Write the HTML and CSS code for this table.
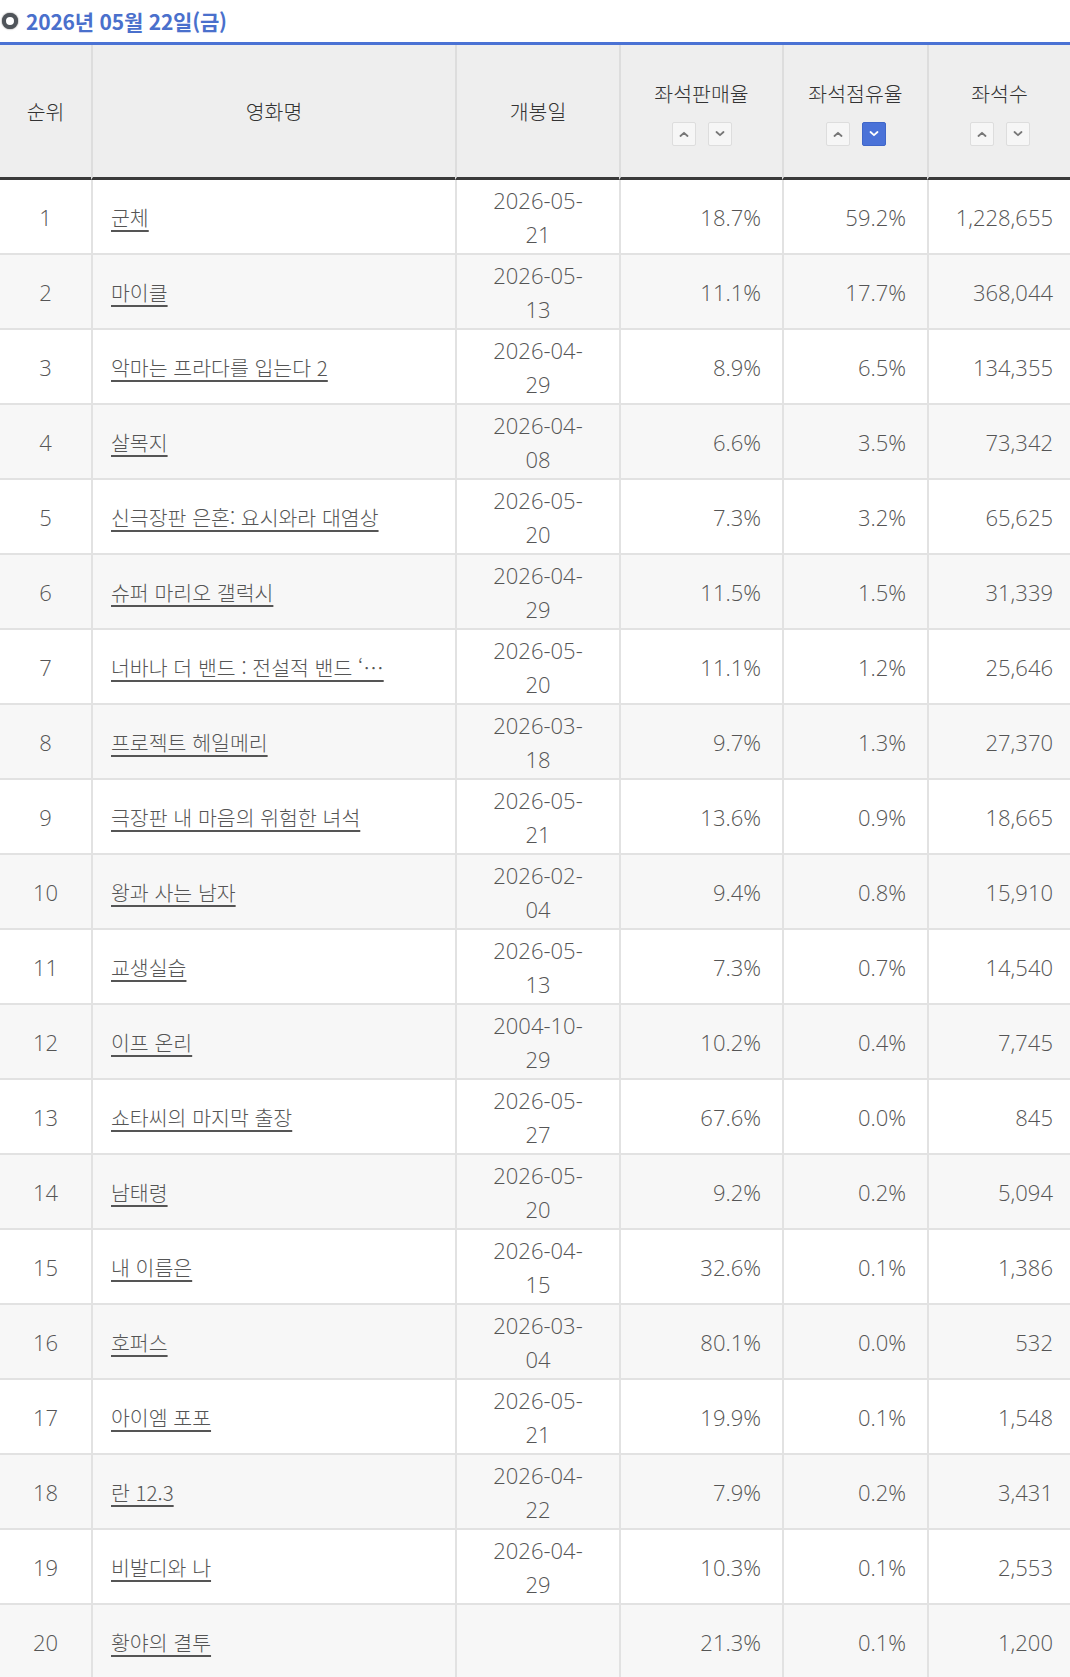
FILE: index.html
```html
<!DOCTYPE html>
<html lang="ko">
<head>
<meta charset="utf-8">
<title>좌석점유율</title>
<link rel="stylesheet" href="styles.css">
</head>
<body>
<h2 class="date-title"><span class="ring"></span>2026년 05월 22일(금)</h2>
<table class="rank-table">
  <colgroup>
    <col class="c-rank"><col class="c-title"><col class="c-date"><col class="c-sale"><col class="c-share"><col class="c-seat">
  </colgroup>
  <thead>
    <tr>
      <th>순위</th>
      <th>영화명</th>
      <th>개봉일</th>
      <th><div class="th-label">좌석판매율</div><div class="sorts"><span class="sort"><svg viewBox="0 0 10 6"><path d="M1.5 5 L5 1.8 L8.5 5"/></svg></span><span class="sort"><svg viewBox="0 0 10 6"><path d="M1.5 1 L5 4.2 L8.5 1"/></svg></span></div></th>
      <th><div class="th-label">좌석점유율</div><div class="sorts"><span class="sort"><svg viewBox="0 0 10 6"><path d="M1.5 5 L5 1.8 L8.5 5"/></svg></span><span class="sort on"><svg viewBox="0 0 10 6"><path d="M1.5 1 L5 4.2 L8.5 1"/></svg></span></div></th>
      <th><div class="th-label">좌석수</div><div class="sorts"><span class="sort"><svg viewBox="0 0 10 6"><path d="M1.5 5 L5 1.8 L8.5 5"/></svg></span><span class="sort"><svg viewBox="0 0 10 6"><path d="M1.5 1 L5 4.2 L8.5 1"/></svg></span></div></th>
    </tr>
  </thead>
  <tbody>
    <tr><td class="rank">1</td><td class="title"><a href="#">군체</a></td><td class="date">2026-05-<br>21</td><td class="num">18.7%</td><td class="num">59.2%</td><td class="num last">1,228,655</td></tr>
    <tr><td class="rank">2</td><td class="title"><a href="#">마이클</a></td><td class="date">2026-05-<br>13</td><td class="num">11.1%</td><td class="num">17.7%</td><td class="num last">368,044</td></tr>
    <tr><td class="rank">3</td><td class="title"><a href="#">악마는 프라다를 입는다 2</a></td><td class="date">2026-04-<br>29</td><td class="num">8.9%</td><td class="num">6.5%</td><td class="num last">134,355</td></tr>
    <tr><td class="rank">4</td><td class="title"><a href="#">살목지</a></td><td class="date">2026-04-<br>08</td><td class="num">6.6%</td><td class="num">3.5%</td><td class="num last">73,342</td></tr>
    <tr><td class="rank">5</td><td class="title"><a href="#">신극장판 은혼: 요시와라 대염상</a></td><td class="date">2026-05-<br>20</td><td class="num">7.3%</td><td class="num">3.2%</td><td class="num last">65,625</td></tr>
    <tr><td class="rank">6</td><td class="title"><a href="#">슈퍼 마리오 갤럭시</a></td><td class="date">2026-04-<br>29</td><td class="num">11.5%</td><td class="num">1.5%</td><td class="num last">31,339</td></tr>
    <tr><td class="rank">7</td><td class="title"><a href="#">너바나 더 밴드 : 전설적 밴드 ‘…</a></td><td class="date">2026-05-<br>20</td><td class="num">11.1%</td><td class="num">1.2%</td><td class="num last">25,646</td></tr>
    <tr><td class="rank">8</td><td class="title"><a href="#">프로젝트 헤일메리</a></td><td class="date">2026-03-<br>18</td><td class="num">9.7%</td><td class="num">1.3%</td><td class="num last">27,370</td></tr>
    <tr><td class="rank">9</td><td class="title"><a href="#">극장판 내 마음의 위험한 녀석</a></td><td class="date">2026-05-<br>21</td><td class="num">13.6%</td><td class="num">0.9%</td><td class="num last">18,665</td></tr>
    <tr><td class="rank">10</td><td class="title"><a href="#">왕과 사는 남자</a></td><td class="date">2026-02-<br>04</td><td class="num">9.4%</td><td class="num">0.8%</td><td class="num last">15,910</td></tr>
    <tr><td class="rank">11</td><td class="title"><a href="#">교생실습</a></td><td class="date">2026-05-<br>13</td><td class="num">7.3%</td><td class="num">0.7%</td><td class="num last">14,540</td></tr>
    <tr><td class="rank">12</td><td class="title"><a href="#">이프 온리</a></td><td class="date">2004-10-<br>29</td><td class="num">10.2%</td><td class="num">0.4%</td><td class="num last">7,745</td></tr>
    <tr><td class="rank">13</td><td class="title"><a href="#">쇼타씨의 마지막 출장</a></td><td class="date">2026-05-<br>27</td><td class="num">67.6%</td><td class="num">0.0%</td><td class="num last">845</td></tr>
    <tr><td class="rank">14</td><td class="title"><a href="#">남태령</a></td><td class="date">2026-05-<br>20</td><td class="num">9.2%</td><td class="num">0.2%</td><td class="num last">5,094</td></tr>
    <tr><td class="rank">15</td><td class="title"><a href="#">내 이름은</a></td><td class="date">2026-04-<br>15</td><td class="num">32.6%</td><td class="num">0.1%</td><td class="num last">1,386</td></tr>
    <tr><td class="rank">16</td><td class="title"><a href="#">호퍼스</a></td><td class="date">2026-03-<br>04</td><td class="num">80.1%</td><td class="num">0.0%</td><td class="num last">532</td></tr>
    <tr><td class="rank">17</td><td class="title"><a href="#">아이엠 포포</a></td><td class="date">2026-05-<br>21</td><td class="num">19.9%</td><td class="num">0.1%</td><td class="num last">1,548</td></tr>
    <tr><td class="rank">18</td><td class="title"><a href="#">란 12.3</a></td><td class="date">2026-04-<br>22</td><td class="num">7.9%</td><td class="num">0.2%</td><td class="num last">3,431</td></tr>
    <tr><td class="rank">19</td><td class="title"><a href="#">비발디와 나</a></td><td class="date">2026-04-<br>29</td><td class="num">10.3%</td><td class="num">0.1%</td><td class="num last">2,553</td></tr>
    <tr><td class="rank">20</td><td class="title"><a href="#">황야의 결투</a></td><td class="date"></td><td class="num">21.3%</td><td class="num">0.1%</td><td class="num last">1,200</td></tr>
  </tbody>
</table>
</body>
</html>
```

FILE: styles.css
```css
html, body {
  margin: 0;
  padding: 0;
  background: #fff;
}
body {
  width: 1070px;
  overflow: hidden;
  font-family: "Noto Sans CJK KR", "Noto Sans", sans-serif;
  color: #555;
}
.date-title {
  margin: 0;
  height: 42px;
  display: flex;
  align-items: center;
  gap: 8px;
  padding-left: 2px;
  font-size: 21px;
  font-weight: 700;
  color: #4a70cc;
  letter-spacing: -0.2px;
}
.ring {
  width: 8px;
  height: 8px;
  border-radius: 50%;
  border: 4px solid #4f545a;
  background: #fff;
  box-shadow: 0 0 1.5px #222;
  flex: none;
}
.rank-table {
  width: 1070px;
  table-layout: fixed;
  border-collapse: separate;
  border-spacing: 0;
  border-top: 3px solid #4a72d4;
}
.c-rank { width: 91px; }
.c-title { width: 364px; }
.c-date { width: 164px; }
.c-sale { width: 163px; }
.c-share { width: 145px; }
.c-seat { width: 143px; }
.rank-table th {
  height: 132px;
  padding: 0;
  background: #eeeeee;
  border-bottom: 3px solid #3a3a3a;
  border-left: 2px solid #dddddd;
  font-weight: 300;
  font-size: 20.5px;
  color: #333;
  vertical-align: middle;
  text-align: center;
}
.rank-table th:first-child { border-left: none; }
.th-label {
  line-height: 28px;
  margin-top: 2px;
}
.sorts {
  display: flex;
  justify-content: center;
  gap: 12px;
  margin-top: 15px;
}
.sort {
  width: 22px;
  height: 22px;
  border: 1px solid #dddddd;
  border-radius: 2px;
  background: #f6f6f6;
  display: flex;
  align-items: center;
  justify-content: center;
}
.sort svg {
  width: 10px;
  height: 6px;
  fill: none;
  stroke: #777;
  stroke-width: 1.8;
  stroke-linecap: round;
  stroke-linejoin: round;
}
.sort.on {
  background: #4a72d8;
  border-color: #3f66c8;
}
.sort.on svg { stroke: #fff; }
.rank-table td {
  height: 68px;
  padding: 3px 0 2px;
  border-bottom: 2px solid #e2e2e2;
  border-left: 2px solid #e2e2e2;
  font-family: "Open Sans", "Noto Sans CJK KR", sans-serif;
  font-weight: 300;
  font-size: 22px;
  line-height: 34px;
  color: #555;
  vertical-align: middle;
}
.rank-table td:first-child { border-left: none; }
.rank-table tbody tr:nth-child(even) td { background: #f7f7f7; }
.rank { text-align: center; }
.date { text-align: center; }
.num {
  text-align: right;
  padding-right: 21px !important;
}
.num.last { padding-right: 17px !important; }
.title {
  padding-left: 18px !important;
  font-family: "Noto Sans CJK KR", sans-serif !important;
  font-size: 20.5px !important;
}
.title a {
  white-space: nowrap;
  color: #555;
  text-decoration: underline;
  text-underline-offset: 4px;
}
```
